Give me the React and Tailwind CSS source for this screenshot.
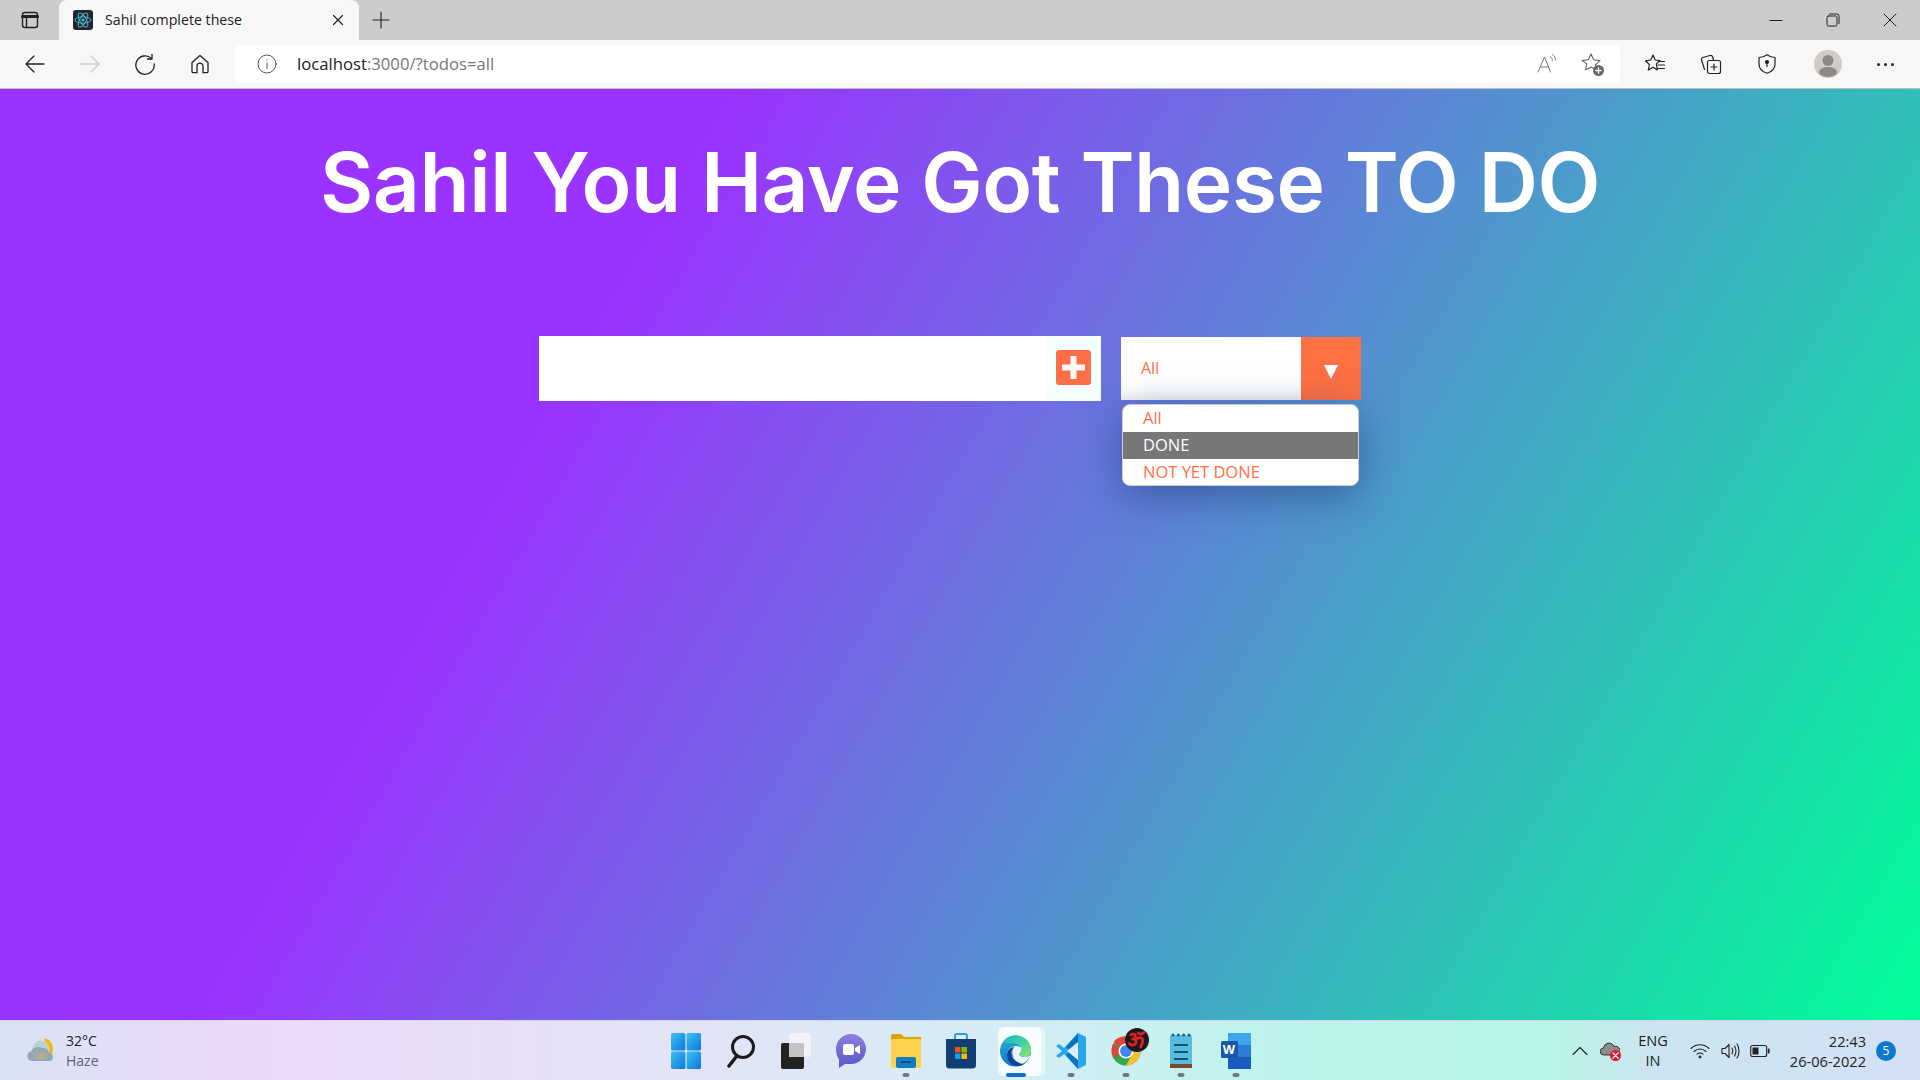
import React from "react";

const UI = { fontFamily: '"Open Sans", "Noto Sans", sans-serif' };

const Stroke = ({ w = 20, h = 20, vb = "0 0 20 20", c = "#222", sw = 1.2, children, className = "" }) => (
  <svg width={w} height={h} viewBox={vb} fill="none" stroke={c} strokeWidth={sw} strokeLinecap="round" strokeLinejoin="round" className={className}>
    {children}
  </svg>
);

const ReactFav = () => (
  <svg width="20" height="20" viewBox="0 0 20 20">
    <rect width="20" height="20" rx="3" fill="#22262b" />
    <g fill="none" stroke="#4fc3dc" strokeWidth="0.9">
      <ellipse cx="10" cy="10" rx="8" ry="3.2" />
      <ellipse cx="10" cy="10" rx="8" ry="3.2" transform="rotate(60 10 10)" />
      <ellipse cx="10" cy="10" rx="8" ry="3.2" transform="rotate(120 10 10)" />
    </g>
    <circle cx="10" cy="10" r="1.6" fill="#4fc3dc" />
  </svg>
);

function TabStrip() {
  return (
    <div className="h-10 bg-[#cccccc] flex items-stretch shrink-0">
      <div className="w-[59px] flex items-center justify-center">
        <Stroke w={20} h={20} c="#222" sw={1.4}>
          <rect x="2.5" y="2.5" width="15" height="15" rx="2.5" />
          <path d="M2.5 6.5h15" strokeWidth="3" />
          <path d="M6.5 6.5v11" />
        </Stroke>
      </div>
      <div className="w-[300px] bg-[#f7f7f7] rounded-t-lg flex items-center pl-[14px]">
        <ReactFav />
        <span className="ml-3 text-[14.2px] text-[#222] flex-1 leading-none" style={UI}>Sahil complete these</span>
        <div className="w-[42px] flex justify-center">
          <Stroke w={12} h={12} vb="0 0 12 12" c="#222" sw={1.2}><path d="M1.5 1.5l9 9M10.5 1.5l-9 9" /></Stroke>
        </div>
      </div>
      <div className="w-11 flex items-center justify-center">
        <Stroke w={18} h={18} vb="0 0 18 18" c="#222" sw={1.1}><path d="M9 1v16M1 9h16" /></Stroke>
      </div>
      <div className="flex-1" />
      <div className="flex items-center pr-[1px]">
        <div className="w-[57px] flex justify-center">
          <Stroke w={14} h={14} vb="0 0 14 14" c="#222" sw={1}><path d="M1 7.5h12" /></Stroke>
        </div>
        <div className="w-[57px] flex justify-center">
          <Stroke w={14} h={14} vb="0 0 14 14" c="#222" sw={1}>
            <rect x="1" y="3" width="10" height="10" rx="1.5" />
            <path d="M3.5 1h7.5a2 2 0 0 1 2 2v7.5" />
          </Stroke>
        </div>
        <div className="w-[58px] flex justify-center">
          <Stroke w={14} h={14} vb="0 0 14 14" c="#222" sw={1}><path d="M1 1l12 12M13 1L1 13" /></Stroke>
        </div>
      </div>
    </div>
  );
}

function Toolbar() {
  return (
    <div className="h-[49px] bg-[#f7f7f7] flex items-center shrink-0 border-b border-[#bdbdbd]">
      <div className="w-[235px] pl-[7px] flex items-center">
        <div className="w-[55px] flex justify-center">
          <Stroke w={22} h={22} vb="0 0 22 22" c="#222" sw={1.3}><path d="M20 11H2M10 3l-8 8 8 8" /></Stroke>
        </div>
        <div className="w-[55px] flex justify-center">
          <Stroke w={22} h={22} vb="0 0 22 22" c="#c9c9c9" sw={1.3}><path d="M2 11h18M12 3l8 8-8 8" /></Stroke>
        </div>
        <div className="w-[55px] flex justify-center">
          <Stroke w={22} h={22} vb="0 0 22 22" c="#222" sw={1.3}>
            <path d="M17.5 5.5A9.2 9.2 0 1 0 20.2 11" />
            <path d="M18 1.5v4.5h-4.5" />
          </Stroke>
        </div>
        <div className="w-[55px] flex justify-center">
          <Stroke w={22} h={22} vb="0 0 22 22" c="#222" sw={1.3}>
            <path d="M3 9.5L11 2.5l8 7v9a1.2 1.2 0 0 1-1.2 1.2H14v-6.5a3 3 0 0 0-6 0v6.5H4.2A1.2 1.2 0 0 1 3 18.5z" />
          </Stroke>
        </div>
      </div>
      <div className="w-[1385px] h-[38px] bg-white rounded-md flex items-center pl-[22px] pr-[16px]">
        <Stroke w={20} h={20} c="#555" sw={1}>
          <circle cx="10" cy="10" r="9" />
          <path d="M10 9v5.5M10 5.6v.4" />
        </Stroke>
        <span className="ml-[20px] text-[16.7px] flex-1" style={UI}>
          <span className="text-[#222]">localhost</span>
          <span className="text-[#777]">:3000/?todos=all</span>
        </span>
        <Stroke w={22} h={22} vb="0 0 22 22" c="#777" sw={1}>
          <path d="M2 19L8.5 4l6 15M4.5 14h8" />
          <path d="M14 3.5c1.6 1 2.4 2.3 2.4 4M16.5 1.5c2 1.3 3 3.200 3 5.500" />
        </Stroke>
        <div className="ml-[22px] relative w-6 h-6">
          <Stroke w={22} h={22} vb="0 0 22 22" c="#666" sw={1.1}>
            <path d="M11 2l2.700 5.800 6.300.8-4.600 4.300 1 5-5.400-2.900-5.400 3 1.100-6.300L2 8.600l6.300-.8z" />
          </Stroke>
          <div className="absolute right-0 bottom-0 w-[11px] h-[11px] rounded-full bg-[#666] text-white flex items-center justify-center">
            <Stroke w={7} h={7} vb="0 0 8 8" c="#fff" sw={1.5}><path d="M4 1v6M1 4h6" /></Stroke>
          </div>
        </div>
      </div>
      <div className="flex-1 flex items-center">
        <div className="w-[70px] flex justify-center">
          <Stroke w={22} h={22} vb="0 0 22 22" c="#222" sw={1.2}>
            <path d="M9 2l2.200 5 4.800.6-3.600 3.300.9 6-4.300-2.700-4.700 2.900 1.100-5.600L1.500 7.800 6.800 7z" />
            <path d="M14.500 8.500h6M14 12h6.500M14 15.500h6.500" />
          </Stroke>
        </div>
        <div className="w-[42px] flex justify-center">
          <Stroke w={24} h={24} vb="0 0 24 24" c="#222" sw={1.2}>
            <rect x="8.500" y="8.500" width="13" height="13" rx="2" />
            <path d="M15 12v6M12 15h6" />
            <path d="M5.500 17.500L2.500 8a2 2 0 0 1 1.400-2.500L11 3.500c1.300-.3 2.300.3 2.700 1.500l.8 3" />
          </Stroke>
        </div>
        <div className="w-[70px] flex justify-center">
          <Stroke w={22} h={22} vb="0 0 22 22" c="#222" sw={1.2}>
            <path d="M11 1.800c2.400 1.800 4.900 2.700 8 2.700V11c0 4.500-3 7.700-8 9.300-5-1.600-8-4.800-8-9.300V4.500c3.100 0 5.600-.9 8-2.700z" />
            <circle cx="11" cy="9" r="1.500" fill="#222" />
            <path d="M11 10v3.500" />
          </Stroke>
        </div>
        <div className="w-[52px] flex justify-center">
          <svg width="28" height="28" viewBox="0 0 28 28">
            <circle cx="14" cy="14" r="14" fill="#cfccc9" />
            <circle cx="14" cy="10.500" r="5.500" fill="#8c8987" />
            <ellipse cx="14" cy="22" rx="9" ry="5" fill="#8c8987" />
          </svg>
        </div>
        <div className="w-[62px] flex justify-center gap-[4px]">
          <span className="w-[3px] h-[3px] rounded-full bg-[#222]" />
          <span className="w-[3px] h-[3px] rounded-full bg-[#222]" />
          <span className="w-[3px] h-[3px] rounded-full bg-[#222]" />
        </div>
      </div>
    </div>
  );
}

const options = ["All", "DONE", "NOT YET DONE"];

function Page() {
  return (
    <div className="flex-1 bg-[linear-gradient(120deg,#9a33ff_30%,#00ff99_100%)] flex flex-col items-center">
      <h1 className="mt-[34px] text-[82px] leading-[120px] font-semibold text-white tracking-[-0.45px]" style={{ fontFamily: 'Inter, sans-serif' }}>
        Sahil You Have Got These TO DO
      </h1>
      <div className="mt-[93px] flex items-center mr-[20px]">
        <div className="w-[562px] h-[65px] flex items-stretch">
          <div className="w-[507px] bg-white" />
          <div className="flex-1 bg-[#f5fffe] flex items-center justify-start pl-[10px] pb-[2px]">
            <div className="w-[35px] h-[35px] rounded-[3px] bg-[#ff6f47] flex items-center justify-center">
              <svg width="23" height="23" viewBox="0 0 23 23"><path d="M8.500 0h6v8.500H23v6h-8.500V23h-6v-8.500H0v-6h8.500z" fill="#fdfbf7" /></svg>
            </div>
          </div>
        </div>
        <div className="relative ml-5 w-[240px] h-[63px] flex bg-[linear-gradient(#ffffff_82%,#f3f3f3)]">
          <div className="flex-1 flex items-center pl-5 text-[16px] text-[#ff7043] pb-[2px]" style={UI}>All</div>
          <div className="w-[60px] bg-[#ff7043] flex items-center justify-center pt-[6px]">
            <span className="w-0 h-0 border-l-[7px] border-r-[7px] border-t-[14px] border-l-transparent border-r-transparent border-t-white" />
          </div>
          <div className="absolute left-[1px] top-[67px] w-[237px] rounded-[8px] overflow-hidden bg-white border border-[#cfcfcf] shadow-[0_10px_40px_rgba(30,60,120,0.55)]" style={UI}>
            {options.map((o) => (
              <div key={o} className={`h-[27px] last:h-[26px] flex items-center pl-5 text-[16.5px] leading-none ${o === "DONE" ? "bg-[#777777] text-white" : "text-[#ff7043]"}`}>{o}</div>
            ))}
          </div>
        </div>
      </div>
    </div>
  );
}

const Dot = ({ blue }) => <span className={`absolute bottom-[3px] left-1/2 -translate-x-1/2 h-[4px] rounded-full ${blue ? "w-5 bg-[#0a6fc9]" : "w-[7px] bg-[#6f7a80]"}`} />;

const Win = () => (
  <svg width="30" height="36" viewBox="0 0 30 36">
    <defs>
      <linearGradient id="w1" x1="0" y1="0" x2="1" y2="1"><stop offset="0" stopColor="#3dc3f5" /><stop offset="1" stopColor="#0a78d8" /></linearGradient>
    </defs>
    <rect x="0" y="0" width="14.400" height="17.400" rx="1.500" fill="url(#w1)" />
    <rect x="15.600" y="0" width="14.400" height="17.400" rx="1.500" fill="url(#w1)" />
    <rect x="0" y="18.600" width="14.400" height="17.400" rx="1.500" fill="url(#w1)" />
    <rect x="15.600" y="18.600" width="14.400" height="17.400" rx="1.500" fill="url(#w1)" />
  </svg>
);

const Search = () => (
  <svg width="28" height="34" viewBox="0 0 28 34" fill="none" stroke="#1c1c1c" strokeLinecap="round">
    <circle cx="16" cy="13" r="10.500" strokeWidth="3" />
    <path d="M9 23L2 32" strokeWidth="3.500" />
  </svg>
);

const TaskView = () => (
  <svg width="30" height="36" viewBox="0 0 30 36">
    <rect x="0" y="10" width="23" height="26" rx="2" fill="#222" />
    <rect x="8" y="0" width="22" height="24" rx="1.500" fill="#f4f4f4" fillOpacity="0.85" />
    <rect x="8" y="10" width="15" height="14" fill="#c4c4c4" />
  </svg>
);

const Chat = () => (
  <svg width="30" height="34" viewBox="0 0 30 34">
    <defs><linearGradient id="c1" x1="0" y1="0" x2="0" y2="1"><stop offset="0" stopColor="#8d7fe0" /><stop offset="1" stopColor="#5b55c4" /></linearGradient></defs>
    <path d="M15 0c8.300 0 15 6.700 15 15s-6.700 15-15 15H9l-6 4v-8.500C1 23 0 19 0 15 0 6.700 6.700 0 15 0z" fill="url(#c1)" />
    <rect x="7" y="10" width="11" height="11" rx="2" fill="#fff" />
    <path d="M19 14l5-3v9l-5-3z" fill="#fff" />
  </svg>
);

const Folder = () => (
  <svg width="30" height="36" viewBox="0 0 30 36">
    <path d="M0 3a2 2 0 0 1 2-2h8l3 3h17v6H0z" fill="#e0a100" />
    <rect x="0" y="6" width="30" height="29" rx="1.500" fill="#fcd34d" />
    <rect x="5" y="24" width="20" height="11" rx="2" fill="#0f7cc4" />
    <path d="M10 29h10" stroke="#063f70" strokeWidth="1.500" />
  </svg>
);

const Store = () => (
  <svg width="30" height="36" viewBox="0 0 30 36">
    <path d="M9 8V3a2 2 0 0 1 2-2h8a2 2 0 0 1 2 2v5" fill="none" stroke="#2ea0e0" strokeWidth="2" />
    <path d="M0 6h30v26a3.500 3.500 0 0 1-3.500 3.500h-23A3.500 3.500 0 0 1 0 32z" fill="#123f73" />
    <rect x="9" y="14" width="5.500" height="5.500" fill="#f25022" />
    <rect x="15.500" y="14" width="5.500" height="5.500" fill="#7fba00" />
    <rect x="9" y="20.500" width="5.500" height="5.500" fill="#00a4ef" />
    <rect x="15.500" y="20.500" width="5.500" height="5.500" fill="#ffb900" />
  </svg>
);

const Edge = () => (
  <svg width="31" height="34" viewBox="0 0 31 34">
    <defs>
      <linearGradient id="e1" x1="0" y1="0" x2="0.300" y2="1"><stop offset="0" stopColor="#29b3d6" /><stop offset="1" stopColor="#1173d0" /></linearGradient>
      <linearGradient id="e2" x1="0" y1="0" x2="1" y2="0.800"><stop offset="0" stopColor="#1fb6cf" /><stop offset="0.600" stopColor="#3fd2a0" /><stop offset="1" stopColor="#8ae26a" /></linearGradient>
    </defs>
    <circle cx="15.500" cy="17" r="15.500" fill="url(#e1)" />
    <path d="M3 8C6 3.500 10.500 1.500 15.500 1.500 24 1.500 31 8 31 16c0 4.500-2.700 7-6.500 7-2.800 0-5-1-5.500-2.500 1.500-1 2.500-2.500 2.500-4.500C21.500 11.500 16.500 9 12 9 8.500 9 5 9.500 3 8z" fill="url(#e2)" />
    <path d="M7 21c0-5.500 4-9 9-9 2.500 0 4.500.7 5.500 2 .5 2.500-.8 5-2.500 6.500 1 2 3.500 2.500 5.500 2.500 2.500 0 4.500-.8 6-2-1 3-4 7-7.500 8.500-8 2-16-2-16-8.500z" fill="#ffffff" fillOpacity="0.9" />
    <path d="M7 21c0-4.500 3-7.500 7.500-8-2 1.500-3 3.500-3 6 0 5 5 10 12 11.500-2 1-4.500 1.500-7 1.500C11.500 31.500 7 27 7 21z" fill="#0c4596" />
    <path d="M11.500 19c0-2.500 1-4.500 3-6-3 2-3 8 0 11-1.500-1-3-3-3-5z" fill="#1a5cb0" />
  </svg>
);

const VSCode = () => (
  <svg width="30" height="36" viewBox="0 0 30 36">
    <path d="M22 0l8 4v28l-8 4L8 21l-5 4-3-2 6-5-6-5 3-2 5 4z" fill="#2aa6ea" />
    <path d="M22 0l-12 14 4 4-4 4 12 14z" fill="#0d73be" />
    <path d="M22 9v18L11 18z" fill="#e6f6f8" fillOpacity="0.95" />
  </svg>
);

const Chrome = () => (
  <div className="relative w-[30px] h-[30px]">
    <svg width="30" height="30" viewBox="0 0 32 32">
      <circle cx="16" cy="16" r="15.500" fill="#34a853" />
      <path d="M16 .5a15.500 15.500 0 0 1 13.400 7.800H16A7.700 7.700 0 0 0 9.300 12L3 5.800A15.500 15.500 0 0 1 16 .5z" fill="#ea4335" />
      <path d="M2.500 8C-.500 13 .5 20 4 24l8-8z" fill="#de4537" />
      <path d="M29.400 8.300A15.500 15.500 0 0 1 16 31.500l6.600-11.700A7.700 7.700 0 0 0 22.600 12z" fill="#fbc02d" />
      <circle cx="16" cy="16" r="8" fill="#fff" />
      <circle cx="16" cy="16" r="6.300" fill="#4285f4" />
    </svg>
    <div className="absolute top-[-8px] left-[14px] w-[24px] h-[24px] rounded-full bg-[#1d1a1c] flex items-center justify-center">
      <Stroke w={20} h={20} vb="0 0 16 16" c="#e0202a" sw={2.200}>
        <path d="M3 4c2-1.500 4.500-.5 3.500 1.800C6 7 5 7.300 4.500 7.300 7 7 8 9 6.800 11c-1.300 1.800-4 1.300-5-.3M7.500 7.500C9 5.500 12 5.500 12.500 8c.4 2.500-1 4-1.500 5.500M9 2.500c1.500 1 3 1 4.500-.5" />
      </Stroke>
    </div>
  </div>
);

const Notepad = () => (
  <svg width="22" height="36" viewBox="0 0 22 36">
    <rect x="0" y="2" width="22" height="32" rx="1.500" fill="#58bcdc" />
    <rect x="0" y="31" width="22" height="4" fill="#7a4a2a" />
    <g fill="#1e5f84"><circle cx="3" cy="2" r="1.500" /><circle cx="8.300" cy="2" r="1.500" /><circle cx="13.600" cy="2" r="1.500" /><circle cx="19" cy="2" r="1.500" /></g>
    <g stroke="#134f78" strokeWidth="2"><path d="M4 12h14M4 19h14M4 26h14" /></g>
  </svg>
);

const Word = () => (
  <div className="relative w-[30px] h-[36px]">
    <svg width="30" height="36" viewBox="0 0 30 36" className="absolute left-0 top-0">
      <rect x="7" y="0" width="23" height="12" fill="#41a5ee" />
      <rect x="7" y="12" width="23" height="12" fill="#2b7cd3" />
      <rect x="7" y="24" width="23" height="12" fill="#185abd" />
      <rect x="0" y="8" width="17" height="17" rx="1.500" fill="#1a56a8" />
    </svg>
    <span className="absolute left-0 top-[8px] w-[17px] h-[17px] flex items-center justify-center text-white text-[13px] font-bold leading-none" style={{ fontFamily: '"Liberation Sans", sans-serif' }}>W</span>
  </div>
);

const apps = [
  [Win, null], [Search, null], [TaskView, null], [Chat, null], [Folder, "d"], [Store, null], [Edge, "b"], [VSCode, "d"], [Chrome, "d"], [Notepad, "d"], [Word, "d"],
];

function Taskbar() {
  return (
    <div className="relative h-[60px] shrink-0 bg-[linear-gradient(90deg,#d9e3f5_0%,#edd9fa_12%,#e5e3f7_33%,#d5ecf5_52%,#bdf4ed_67%,#b8f5e8_81%,#cbe5f0_86%,#d3e0f5_100%)] border-t border-[#cfd8ea] flex items-center justify-between" style={UI}>
      <div className="w-[300px] flex items-center pl-[26px]">
        <svg width="30" height="30" viewBox="0 0 30 30">
          <path d="M18 2c5 1 9 5 9 11 0 3-1 5-2 6L18 12c1.500-3 1.500-7 0-10z" fill="#f6b70a" />
          <circle cx="15" cy="13" r="8.500" fill="#bcd0d6" />
          <path d="M6 25a5 5 0 0 1-1-9.800A8 8 0 0 1 16 12a6 6 0 0 1 7 5 4 4 0 0 1 0 8z" fill="#93a9b5" />
          <path d="M9 20c2-4 9-5 12-1 0 3-2 4-6 4s-6-1-6-3z" fill="#b5ad8a" />
        </svg>
        <div className="ml-[10px] text-[14px] leading-[20px]">
          <div className="text-[#222]">32°C</div>
          <div className="text-[#5d6270]">Haze</div>
        </div>
      </div>
      <div className="absolute left-[658px] top-0 h-full flex items-stretch">
        {apps.map(([Icon, mark], i) => (
          <div key={i} className="relative w-[55px] h-[59px] flex items-center justify-center">
            {mark === "b" && (
              <>
                <div className="absolute left-[13px] top-[6px] w-[44px] h-[49px] rounded-[5px] bg-white/40" />
                <div className="absolute left-[10px] top-[6px] w-[43px] h-[49px] rounded-[5px] bg-white/70" />
              </>
            )}
            <div className="relative flex items-center justify-center"><Icon /></div>
            {mark && <Dot blue={mark === "b"} />}
          </div>
        ))}
      </div>
      <div className="flex items-center text-[#222] text-[14px] h-full pr-[24px]">
        <Stroke w={16} h={16} vb="0 0 16 16" c="#222" sw={1.1}><path d="M1 11.500l7-7 7 7" /></Stroke>
        <div className="relative ml-[12px] w-[21px] h-[21px]">
          <svg width="20" height="20" viewBox="0 0 20 20"><path d="M4 15a3.500 3.500 0 0 1-.5-7A5.500 5.500 0 0 1 14 6.500 4.500 4.500 0 0 1 17 15z" fill="#8d8d8d" stroke="#333" strokeWidth="1" /></svg>
          <div className="absolute right-0 bottom-0 w-[11px] h-[11px] rounded-full bg-[#e3172b] flex items-center justify-center">
            <Stroke w={7} h={7} vb="0 0 8 8" c="#fff" sw={1.600}><path d="M1 1l6 6M7 1L1 7" /></Stroke>
          </div>
        </div>
        <div className="ml-[18px] w-[28px] text-center leading-[20px] text-[14.5px]">
          <div className="-mx-2">ENG</div>
          <div>IN</div>
        </div>
        <div className="ml-[23px]">
          <Stroke w={20} h={16} vb="0 0 20 16" c="#222" sw={1.100}>
            <path d="M1 5.500c5-5 13-5 18 0M4 8.500c3.500-3.300 8.500-3.300 12 0M7 11.200c1.800-1.500 4.200-1.500 6 0" />
            <circle cx="10" cy="14" r="0.900" fill="#222" />
          </Stroke>
        </div>
        <div className="ml-[11px]">
          <Stroke w={20} h={18} vb="0 0 20 18" c="#222" sw={1.100}>
            <path d="M1 6.500v5h3l4 4v-13l-4 4zM11 6c1 1.800 1 4.200 0 6M13.500 4c1.800 3 1.800 7 0 10M16 2c2.700 4 2.700 10 0 14" />
          </Stroke>
        </div>
        <div className="ml-[9px]">
          <Stroke w={20} h={14} vb="0 0 20 14" c="#222" sw={1.100}>
            <rect x="0.700" y="1.500" width="16" height="11" rx="2" />
            <rect x="2.500" y="3.500" width="6" height="7" fill="#222" stroke="none" />
            <path d="M18.700 5.500v3" strokeWidth="1.800" />
          </Stroke>
        </div>
        <div className="ml-[19px] w-[77px] text-right leading-[20px] whitespace-nowrap text-[14.6px]">
          <div>22:43</div>
          <div className="-ml-[10px]">26-06-2022</div>
        </div>
        <div className="ml-[10px] w-5 h-5 rounded-full bg-[#0b78d0] text-white text-[12px] flex items-center justify-center">5</div>
      </div>
    </div>
  );
}

export default function App() {
  return (
    <div className="w-[1920px] h-[1080px] flex flex-col overflow-hidden bg-white">
      <TabStrip />
      <Toolbar />
      <Page />
      <Taskbar />
    </div>
  );
}
